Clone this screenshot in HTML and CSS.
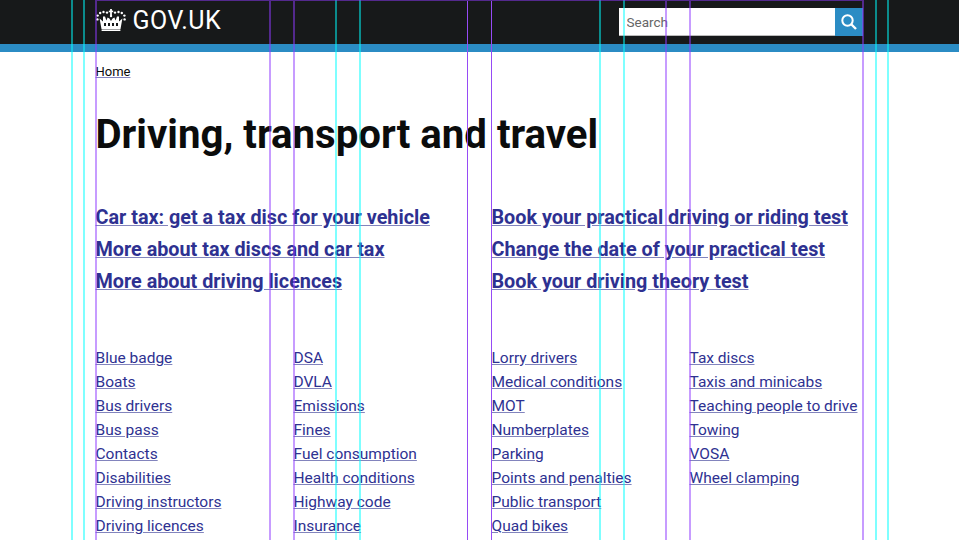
FILE: index.html
```html
<!DOCTYPE html>
<html>
    <head>
        <title>Driving, transport and travel</title>
        <link rel="stylesheet" href="styles.css">
    </head>
    <body>
        <div class="header">
            <div class="wrap header-row">
                <a class="logo" href="#">
                    <svg class="crown" width="30" height="22" viewBox="0 0 30 22">
                        <g fill="#fff">
                            <rect x="14.1" y="0" width="1.8" height="6"/>
                            <rect x="12.8" y="1.6" width="4.4" height="1.6"/>
                            <circle cx="15" cy="7" r="1.2"/>
                            <circle cx="11" cy="3.6" r="1.2"/>
                            <circle cx="19" cy="3.6" r="1.2"/>
                            <circle cx="7.5" cy="3" r="1.2"/>
                            <circle cx="22.5" cy="3" r="1.2"/>
                            <circle cx="4.2" cy="4" r="1.2"/>
                            <circle cx="25.8" cy="4" r="1.2"/>
                            <circle cx="1.6" cy="6.6" r="1.2"/>
                            <circle cx="28.4" cy="6.6" r="1.2"/>
                            <circle cx="1.4" cy="10.4" r="1.2"/>
                            <circle cx="28.6" cy="10.4" r="1.2"/>
                            <path d="M5.5 20 L3.6 9.5 L7 12.5 L7 7.5 L9 7.5 L10.4 11.5 L11.6 8.5 L13.4 9.5 L15 12 L16.6 9.5 L18.4 8.5 L19.6 11.5 L21 7.5 L23 7.5 L23 12.5 L26.4 9.5 L24.5 20 Z"/>
                            <rect x="5.6" y="20.4" width="18.8" height="1.6"/>
                        </g>
                        <g fill="#17191a">
                            <rect x="8" y="14" width="2" height="3"/>
                            <rect x="12" y="14" width="2" height="3"/>
                            <rect x="16" y="14" width="2" height="3"/>
                            <rect x="20" y="14" width="2" height="3"/>
                        </g>
                    </svg>
                    <span>GOV.UK</span>
                </a>
                <form class="search">
                    <input type="text" class="search-box" placeholder="Search">
                    <button type="button" class="search-btn">
                        <svg width="18" height="18" viewBox="0 0 18 18">
                            <circle cx="7.5" cy="7.5" r="5.2" fill="none" stroke="#fff" stroke-width="2"/>
                            <path d="M11.5 11.5 L16 16" stroke="#fff" stroke-width="2.4"/>
                        </svg>
                    </button>
                </form>
            </div>
        </div>
        <div class="stripe"></div>

        <div class="wrap">
            <p class="crumb"><a href="#">Home</a></p>
            <h1>Driving, transport and travel</h1>

            <div class="top-links">
                <ul>
                    <li><a href="#">Car tax: get a tax disc for your vehicle</a></li>
                    <li><a href="#">More about tax discs and car tax</a></li>
                    <li><a href="#">More about driving licences</a></li>
                </ul>
                <ul>
                    <li><a href="#">Book your practical driving or riding test</a></li>
                    <li><a href="#">Change the date of your practical test</a></li>
                    <li><a href="#">Book your driving theory test</a></li>
                </ul>
            </div>

            <div class="topics">
                <ul>
                    <li><a href="#">Blue badge</a></li>
                    <li><a href="#">Boats</a></li>
                    <li><a href="#">Bus drivers</a></li>
                    <li><a href="#">Bus pass</a></li>
                    <li><a href="#">Contacts</a></li>
                    <li><a href="#">Disabilities</a></li>
                    <li><a href="#">Driving instructors</a></li>
                    <li><a href="#">Driving licences</a></li>
                </ul>
                <ul>
                    <li><a href="#">DSA</a></li>
                    <li><a href="#">DVLA</a></li>
                    <li><a href="#">Emissions</a></li>
                    <li><a href="#">Fines</a></li>
                    <li><a href="#">Fuel consumption</a></li>
                    <li><a href="#">Health conditions</a></li>
                    <li><a href="#">Highway code</a></li>
                    <li><a href="#">Insurance</a></li>
                </ul>
                <ul>
                    <li><a href="#">Lorry drivers</a></li>
                    <li><a href="#">Medical conditions</a></li>
                    <li><a href="#">MOT</a></li>
                    <li><a href="#">Numberplates</a></li>
                    <li><a href="#">Parking</a></li>
                    <li><a href="#">Points and penalties</a></li>
                    <li><a href="#">Public transport</a></li>
                    <li><a href="#">Quad bikes</a></li>
                </ul>
                <ul>
                    <li><a href="#">Tax discs</a></li>
                    <li><a href="#">Taxis and minicabs</a></li>
                    <li><a href="#">Teaching people to drive</a></li>
                    <li><a href="#">Towing</a></li>
                    <li><a href="#">VOSA</a></li>
                    <li><a href="#">Wheel clamping</a></li>
                </ul>
            </div>
        </div>

        <!-- grid overlay -->
        <div class="guides guides-cyan">
            <i></i><i></i><i></i><i></i><i></i><i></i><i></i>
        </div>
        <div class="guides guides-purple">
            <i></i><i></i><i></i><i class="strong"></i><i class="strong"></i><i></i><i></i>
        </div>
    </body>
</html>
```

FILE: styles.css
```css
* {
    box-sizing: border-box;
}
html, body {
    height: 540px;
    overflow: hidden;
}
body {
    margin: 0;
    position: relative;
    background: #ffffff;
    color: #0b0c0c;
    font-family: "Roboto", "Liberation Sans", sans-serif;
}
a {
    color: #2e3191;
    text-decoration-color: #8284bd;
}
ul {
    list-style: none;
    margin: 0;
    padding: 0;
}
.wrap {
    width: 768px;
    margin: 0 auto;
}

/*Header*/
.header {
    background-color: #17191a;
    height: 44px;
}
.header-row {
    display: flex;
    justify-content: space-between;
    height: 44px;
}
.logo {
    display: flex;
    align-items: center;
    gap: 7px;
    height: 40px;
    color: #ffffff;
    font-size: 25px;
    letter-spacing: 0.5px;
    text-decoration: none;
}
.search {
    display: flex;
    margin: 8px 1px 0 0;
    height: 28px;
}
.search-box {
    width: 216px;
    height: 28px;
    border: 0;
    border-bottom: 1px solid #bbbbbb;
    padding: 0 8px;
    font-family: inherit;
    font-size: 13.5px;
    outline: none;
}
.search-box::placeholder {
    color: #666666;
    opacity: 1;
}
.search-btn {
    width: 28px;
    height: 28px;
    border: 0;
    padding: 0;
    background-color: #2b8cc4;
    display: flex;
    align-items: center;
    justify-content: center;
}
.stripe {
    height: 8px;
    background-color: #2b8cc4;
}

/*Main*/
.crumb {
    margin: 0;
    padding-top: 10px;
    font-size: 13px;
    line-height: 20px;
}
.crumb a {
    color: #0b0c0c;
}
h1 {
    margin: 0;
    padding-top: 27px;
    font-size: 40.2px;
    font-weight: 700;
    line-height: 52px;
}
.top-links {
    display: grid;
    grid-template-columns: 372px 372px;
    column-gap: 24px;
    padding-top: 41px;
    font-size: 19.8px;
    font-weight: 700;
    line-height: 32px;
}
.topics {
    display: grid;
    grid-template-columns: repeat(4, 174px);
    column-gap: 24px;
    padding-top: 48px;
    font-size: 15.5px;
    line-height: 24px;
}

/*Guides - lines sit across two pixels at half strength, except the middle pair*/
.guides {
    position: absolute;
    top: 0;
    bottom: 0;
    display: grid;
    pointer-events: none;
}
.guides i {
    display: block;
    border-left: 2px solid currentColor;
}
.guides i:last-child {
    border-right: 2px solid currentColor;
}
.guides-cyan {
    left: 71px;
    grid-template-columns: 12px 252px 24px 240px 24px 252px 14px;
    color: rgba(0, 255, 255, 0.5);
}
.guides-purple {
    left: 95px;
    grid-template-columns: 174px 24px 174px 24px 174px 24px 175px;
    border-top: 1px solid rgba(143, 57, 255, 0.5);
    color: rgba(143, 57, 255, 0.5);
}
.guides-purple .strong {
    color: rgb(150, 75, 245);
    border-left-width: 1px;
}
```
